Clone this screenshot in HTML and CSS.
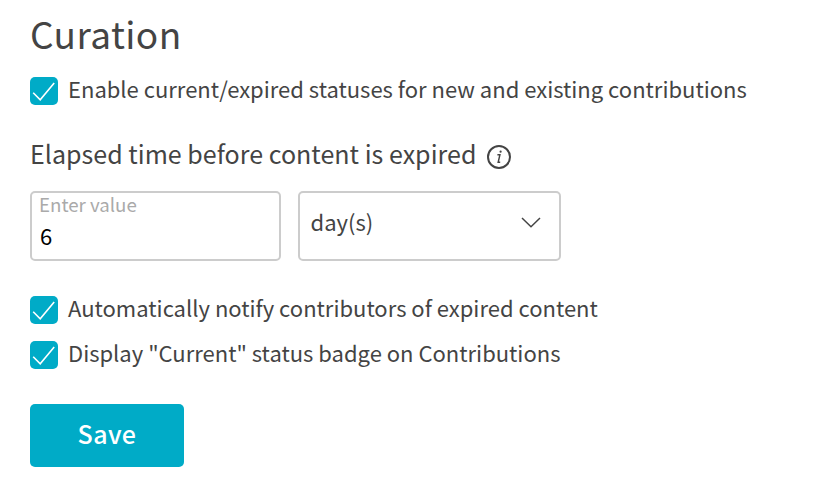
FILE: index.html
```html
<!DOCTYPE html>
<html lang="en">

<head>
    <meta charset="UTF-8">
    <meta name="viewport" content="width=device-width, initial-scale=1.0">
    <title>Curation</title>
    <link rel="stylesheet" href="styles.css">
</head>

<body>
    <form class="curation">
        <h1>Curation</h1>
        <label class="check-row">
            <input type="checkbox" checked>
            <svg class="check" viewBox="0 0 28 28"><path d="M3.2 15.8 L10.2 22.8 L24.2 6"/></svg>
            <span>Enable current/expired statuses for new and existing contributions</span>
        </label>

        <div class="elapsed">
            <span>Elapsed time before content is expired</span>
            <svg class="info" viewBox="0 0 26 26">
                <circle cx="13" cy="13" r="11"/>
                <path d="M11.4 10.8 H13.9 L12.2 18.2 H14.2"/>
                <circle class="dot" cx="14.6" cy="7.7" r="1.1"/>
            </svg>
        </div>

        <div class="fields">
            <label class="value-field">
                <span class="caption">Enter value</span>
                <input type="text" value="6">
            </label>
            <div class="unit-field">
                <span>day(s)</span>
                <svg class="arrow" viewBox="0 0 20 12"><path d="M1 1 L10 9.7 L19 1"/></svg>
            </div>
        </div>

        <label class="check-row">
            <input type="checkbox" checked>
            <svg class="check" viewBox="0 0 28 28"><path d="M3.2 15.8 L10.2 22.8 L24.2 6"/></svg>
            <span>Automatically notify contributors of expired content</span>
        </label>
        <label class="check-row badge-row">
            <input type="checkbox" checked>
            <svg class="check" viewBox="0 0 28 28"><path d="M3.2 15.8 L10.2 22.8 L24.2 6"/></svg>
            <span>Display "Current" status badge on Contributions</span>
        </label>

        <button type="button">Save</button>
    </form>
</body>

</html>
```

FILE: styles.css
```css
* {
    box-sizing: border-box;
}

body {
    margin: 0;
    background-color: #fff;
    color: #444;
    font-family: "Noto Sans CJK JP", "Noto Sans", sans-serif;
}

.curation {
    padding: 5px 30px 0;
    white-space: nowrap;
}

h1 {
    margin: 0 0 16px;
    font-size: 37px;
    font-weight: 400;
    line-height: 56px;
    letter-spacing: 0.4px;
}

.check-row {
    display: flex;
    align-items: center;
    gap: 10px;
    height: 28px;
    font-size: 22px;
    line-height: 28px;
}

.check-row input {
    position: absolute;
    opacity: 0;
}

.check-row span {
    margin-top: -6px;
}

.check {
    width: 28px;
    height: 28px;
    border-radius: 5px;
    background-color: #00abc7;
    fill: none;
    stroke: #fff;
    stroke-width: 1.6;
}

.elapsed {
    display: flex;
    align-items: center;
    gap: 10px;
    margin-top: 35px;
    height: 32px;
    font-size: 25px;
    line-height: 32px;
    letter-spacing: 0.03px;
}

.elapsed span {
    margin-top: -7px;
}

.info {
    width: 26px;
    height: 26px;
    margin-top: 2px;
    fill: none;
    stroke: #444;
    stroke-width: 2;
}

.info path {
    stroke-width: 1.5;
}

.info .dot {
    fill: #444;
    stroke: none;
}

.fields {
    display: flex;
    gap: 17px;
    margin: 19px 0 35px;
}

.value-field,
.unit-field {
    display: flex;
    height: 70px;
    border: 2px solid #ccc;
    border-radius: 5px;
}

.value-field {
    flex-direction: column;
    width: 251px;
    padding: 0 7px;
}

.caption {
    height: 24px;
    color: #aaa;
    font-size: 18.7px;
    line-height: 22px;
}

.value-field input {
    width: 100%;
    height: 36px;
    padding: 0 1px;
    border: none;
    outline: none;
    color: #000;
    font-family: inherit;
    font-size: 22px;
}

.unit-field {
    align-items: center;
    justify-content: space-between;
    width: 263px;
    padding: 0 18px 6px 10.5px;
    font-size: 22px;
    line-height: 28px;
}

.unit-field span {
    margin-top: -4px;
}

.arrow {
    width: 20px;
    height: 12px;
    fill: none;
    stroke: #444;
    stroke-width: 1.5;
}

.badge-row {
    margin-top: 17px;
}

button {
    display: block;
    width: 154px;
    height: 63px;
    margin-top: 35px;
    padding: 0 0 6px;
    border: none;
    border-radius: 5px;
    background-color: #00abc7;
    color: #fff;
    font-family: inherit;
    font-size: 25px;
    font-weight: 500;
    letter-spacing: 0.4px;
}
```
